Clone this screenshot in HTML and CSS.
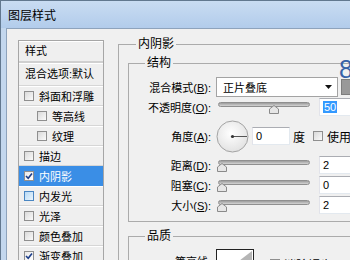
FILE: index.html
```html
<!DOCTYPE html>
<html>
<head>
    <link rel="stylesheet" href="styles.css">
</head>
<body>
    <div class="window">
        <div class="titlebar">图层样式</div>
        <div class="client">
            <div class="style-list">
                <div class="row head">样式</div>
                <div class="row blend">混合选项:默认</div>
                <div class="row"><span class="check"></span>斜面和浮雕</div>
                <div class="row sub"><span class="check"></span>等高线</div>
                <div class="row sub"><span class="check"></span>纹理</div>
                <div class="row"><span class="check"></span>描边</div>
                <div class="row selected"><span class="check on"><svg width="8" height="8" viewBox="0 0 8 8"><path d="M1 4 L3.2 6.3 L7 1.5" fill="none" stroke="#1d3f8a" stroke-width="1.6"/></svg></span>内阴影</div>
                <div class="row"><span class="check hot"></span>内发光</div>
                <div class="row"><span class="check"></span>光泽</div>
                <div class="row"><span class="check"></span>颜色叠加</div>
                <div class="row"><span class="check on"><svg width="8" height="8" viewBox="0 0 8 8"><path d="M1 4 L3.2 6.3 L7 1.5" fill="none" stroke="#1d3f8a" stroke-width="1.6"/></svg></span>渐变叠加</div>
                <div class="row"><span class="check"></span>图案叠加</div>
            </div>

            <div class="options">
                <fieldset class="group outer">
                    <legend>内阴影</legend>
                    <fieldset class="group">
                        <legend>结构</legend>
                        <div class="form">
                            <label>混合模式(<u>B</u>):</label>
                            <div class="ctrl">
                                <div class="select">正片叠底<svg class="arrow" width="7" height="4" viewBox="0 0 7 4"><path d="M0 0 H7 L3.5 4 Z" fill="#111"/></svg></div>
                                <div class="swatch"></div>
                            </div>

                            <label>不透明度(<u>O</u>):</label>
                            <div class="ctrl">
                                <div class="slider">
                                    <div class="track"></div>
                                    <svg class="thumb" style="left: 53px" width="10" height="9" viewBox="0 0 10 9"><path d="M5 0.5 L9.5 4 V8.5 H0.5 V4 Z" fill="#e6e6e6" stroke="#8a8a8a"/></svg>
                                </div>
                                <div class="field wide"><span class="sel">50</span></div>
                            </div>

                            <label>角度(<u>A</u>):</label>
                            <div class="ctrl">
                                <svg class="dial" width="33" height="33" viewBox="0 0 33 33">
                                    <defs>
                                        <radialGradient id="dialfill" cx="0.45" cy="0.4" r="0.6">
                                            <stop offset="0" stop-color="#ffffff"/>
                                            <stop offset="1" stop-color="#e2e2e2"/>
                                        </radialGradient>
                                    </defs>
                                    <circle cx="16.5" cy="16.5" r="15.5" fill="url(#dialfill)" stroke="#a3a3a3"/>
                                    <line x1="16.5" y1="16.5" x2="31" y2="16.5" stroke="#555" stroke-width="1"/>
                                    <circle cx="16.5" cy="16.5" r="1.6" fill="#333"/>
                                </svg>
                                <div class="field short">0</div>
                                <span class="unit">度</span>
                                <span class="check"></span>
                                <span class="opt">使用全局光(<u>G</u>)</span>
                            </div>

                            <label>距离(<u>D</u>):</label>
                            <div class="ctrl">
                                <div class="slider">
                                    <div class="track"></div>
                                    <svg class="thumb" style="left: 1px" width="10" height="9" viewBox="0 0 10 9"><path d="M5 0.5 L9.5 4 V8.5 H0.5 V4 Z" fill="#e6e6e6" stroke="#8a8a8a"/></svg>
                                </div>
                                <div class="field wide">2</div>
                            </div>

                            <label>阻塞(<u>C</u>):</label>
                            <div class="ctrl">
                                <div class="slider">
                                    <div class="track"></div>
                                    <svg class="thumb" style="left: 1px" width="10" height="9" viewBox="0 0 10 9"><path d="M5 0.5 L9.5 4 V8.5 H0.5 V4 Z" fill="#e6e6e6" stroke="#8a8a8a"/></svg>
                                </div>
                                <div class="field wide">0</div>
                            </div>

                            <label>大小(<u>S</u>):</label>
                            <div class="ctrl">
                                <div class="slider">
                                    <div class="track"></div>
                                    <svg class="thumb" style="left: 1px" width="10" height="9" viewBox="0 0 10 9"><path d="M5 0.5 L9.5 4 V8.5 H0.5 V4 Z" fill="#e6e6e6" stroke="#8a8a8a"/></svg>
                                </div>
                                <div class="field wide">2</div>
                            </div>
                        </div>
                    </fieldset>

                    <fieldset class="group quality">
                        <legend>品质</legend>
                        <div class="form">
                            <label class="top">等高线:</label>
                            <div class="ctrl top">
                                <svg class="contour" width="38" height="30" viewBox="0 0 38 30">
                                    <rect x="0.5" y="0.5" width="37" height="29" fill="#fff" stroke="#222"/>
                                    <path d="M2 28 L36 2 V28 Z" fill="#b5b5b5"/>
                                </svg>
                                <span class="check aa"></span>
                                <span class="opt">消除锯齿(<u>L</u>)</span>
                            </div>
                        </div>
                    </fieldset>
                </fieldset>
            </div>
        </div>
        <div class="step">8</div>
    </div>
</body>
</html>
```

FILE: styles.css
```css
* {
    box-sizing: border-box;
}
body {
    margin: 0;
    font-family: "Liberation Sans", "Noto Sans CJK SC", sans-serif;
    font-size: 11px;
    color: #000;
}
.window {
    position: relative;
    width: 350px;
    height: 260px;
    overflow: hidden;
    display: flex;
    flex-direction: column;
    background: #c3d7ee;
    border-top: 1px solid #62788f;
    border-left: 1px solid #62788f;
}
.titlebar {
    flex: none;
    height: 27px;
    padding-left: 7px;
    display: flex;
    align-items: center;
    font-size: 12px;
    background: linear-gradient(#c9dcf2, #b2cceb);
}
.client {
    flex: 1;
    margin-left: 5px;
    padding: 7px 0 0 11px;
    display: flex;
    align-items: flex-start;
    gap: 14px;
    overflow: hidden;
    background: #f0f0f0;
    border-top: 1px solid #8ea3bc;
    border-left: 1px solid #8ea3bc;
}

/* style list on the left */
.style-list {
    flex: none;
    width: 86px;
    margin-top: 4px;
    border: 1px solid #a6a6a6;
    background: #efefef;
}
.row {
    height: 20px;
    display: flex;
    align-items: center;
    gap: 5px;
    padding-left: 5px;
    white-space: nowrap;
    border-bottom: 1px solid #d6d6d6;
    box-shadow: inset 0 1px 0 #fff;
}
.row.head {
    height: 22px;
    padding: 0 0 2px 6px;
    border-bottom: 2px solid #d0d0d0;
}
.row.blend {
    height: 23px;
    padding: 0 0 3px 6px;
}
.row.sub {
    padding-left: 18px;
}
.row.selected {
    background: #3a8ee6;
    color: #fff;
    box-shadow: none;
    border-bottom-color: #3a8ee6;
}
.check {
    flex: none;
    width: 10px;
    height: 10px;
    display: inline-flex;
    align-items: center;
    justify-content: center;
    border: 1px solid #8f8f8f;
    background: linear-gradient(135deg, #d9d9d9, #fafafa);
}
.check.on {
    background: linear-gradient(135deg, #e9e9e9, #ffffff);
}
.check.hot {
    border-color: #4a86c2;
    background: linear-gradient(135deg, #b8daf5, #e9f4fc);
}

/* option groups on the right */
.options {
    flex: none;
    width: 300px;
}
.group {
    margin: 0;
    border: 1px solid #ababab;
    min-width: 0;
}
.group legend {
    margin-left: 8px;
    padding: 0 2px;
    font-size: 12px;
    line-height: 16px;
}
.outer {
    padding: 3px 0 20px 9px;
}
.outer > .group {
    padding: 6px 0 6px 8px;
}
.outer > .quality {
    margin-top: 6px;
    padding-top: 5px;
}
.form {
    display: grid;
    grid-template-columns: 74px auto;
    grid-template-rows: 20px 20px 38px 20px 20px 20px;
    column-gap: 5px;
    align-items: center;
}
.quality .form {
    grid-template-rows: 40px;
}
.form label {
    text-align: right;
    white-space: nowrap;
}
.form .top {
    align-self: start;
}
.form label.top {
    margin-top: 4px;
}
.ctrl {
    display: flex;
    align-items: center;
    white-space: nowrap;
}
.select {
    width: 122px;
    height: 20px;
    display: flex;
    align-items: center;
    justify-content: space-between;
    padding: 0 5px 0 6px;
    background: #fff;
    border: 1px solid #a3a3a3;
}
.swatch {
    width: 20px;
    height: 16px;
    margin-left: 3px;
    background: #999;
    border: 1px solid #7d7d7d;
}
.slider {
    position: relative;
    width: 96px;
    height: 20px;
}
.track {
    width: 92px;
    height: 5px;
    margin: 5px 0 0 2px;
    border: 1px solid #8f8f8f;
    border-radius: 3px;
    background: linear-gradient(#9c9c9c, #d4d4d4);
}
.thumb {
    position: absolute;
    top: 8px;
}
.field {
    height: 18px;
    display: flex;
    align-items: center;
    padding-left: 3px;
    background: #fff;
    border: 1px solid #abadb3;
    border-color: #abadb3 #e3e9ef #e3e9ef #e2e3ea;
}
.field.wide {
    width: 40px;
    margin-left: 7px;
}
.field.short {
    width: 38px;
    margin-left: 3px;
}
.sel {
    background: #3399ff;
    color: #fff;
    padding: 0 1px;
}
.unit {
    margin: 0 8px 0 3px;
    font-size: 12px;
}
.opt {
    margin-left: 4px;
    font-size: 12px;
}
.aa {
    margin-left: 16px;
}
.step {
    position: absolute;
    left: 338px;
    top: 56px;
    font-size: 25px;
    line-height: 1;
    color: #3862a8;
}
```
